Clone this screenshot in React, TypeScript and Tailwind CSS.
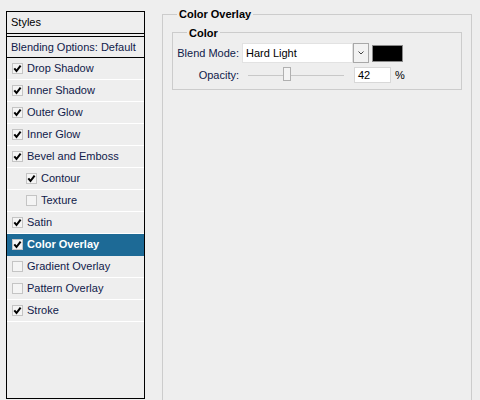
import React from "react";

type Item = { label: string; checked?: boolean; indent?: boolean; active?: boolean };

const items: Item[] = [
  { label: "Drop Shadow", checked: true },
  { label: "Inner Shadow", checked: true },
  { label: "Outer Glow", checked: true },
  { label: "Inner Glow", checked: true },
  { label: "Bevel and Emboss", checked: true },
  { label: "Contour", checked: true, indent: true },
  { label: "Texture", indent: true },
  { label: "Satin", checked: true },
  { label: "Color Overlay", checked: true, active: true },
  { label: "Gradient Overlay" },
  { label: "Pattern Overlay" },
  { label: "Stroke", checked: true },
];

function Check({ checked }: { checked?: boolean }) {
  return (
    <span className="flex h-[11px] w-[11px] shrink-0 items-center justify-center border border-[#c4c4c4] bg-[#f4f4f4]">
      {checked && (
        <svg width="9" height="9" viewBox="0 0 9 9">
          <path d="M1.3 4.4 L3.5 7 L7.6 1.6" fill="none" stroke="#000" strokeWidth="2" />
        </svg>
      )}
    </span>
  );
}

function StyleRow({ item }: { item: Item }) {
  return (
    <div
      className={`flex h-[22px] items-center gap-[4px] border-b ${
        item.active ? "border-[#1d6a96] bg-[#1d6a96] font-bold text-white" : "border-white text-[#10204a]"
      } ${item.indent ? "pl-[19px]" : "pl-[5px]"}`}
    >
      <Check checked={item.checked} />
      <span>{item.label}</span>
    </div>
  );
}

export default function App() {
  return (
    <div
      className="flex h-[400px] w-[480px] overflow-hidden bg-[#eeeeee] pl-[6px] pt-[11px] text-[11px] text-[#10204a]"
      style={{ fontFamily: '"Liberation Sans", Arial, sans-serif' }}
    >
      <div className="flex h-[388px] w-[139px] shrink-0 flex-col border border-black">
        <div className="flex h-[22px] items-center border-b border-black pl-[4px] text-black">Styles</div>
        <div className="mt-[2px] flex h-[22px] items-center border-y border-black pl-[4px]">
          Blending Options: Default
        </div>
        {items.map((it) => (
          <StyleRow key={it.label} item={it} />
        ))}
      </div>

      <fieldset className="ml-[17px] mt-[-5px] h-[420px] w-[310px] border border-[#cccccc] px-[9px]">
        <legend className="ml-[5px] px-[2px] text-[11px] font-bold text-black">Color Overlay</legend>
        <fieldset className="mt-[2px] border border-[#cccccc] pb-[6px]">
          <legend className="ml-[14px] px-[2px] font-bold text-black">Color</legend>
          <div className="mt-[2px] flex h-[20px] items-center">
            <span className="w-[66px] text-right text-[#10204a]">Blend Mode:</span>
            <div className="ml-[3px] flex h-[20px] w-[111px] items-center border border-[#e2e2e2] bg-white pl-[3px] text-black">
              Hard Light
            </div>
            <div className="flex h-[20px] w-[16px] items-center justify-center border border-[#a8a8a8] bg-[#f2f2f2]">
              <svg width="6" height="4" viewBox="0 0 6 4">
                <path d="M0.5 0.5 L3 3 L5.5 0.5" fill="none" stroke="#444" strokeWidth="1" />
              </svg>
            </div>
            <div className="ml-[3px] h-[17px] w-[31px] border border-[#8a8a8a] bg-black" />
          </div>
          <div className="mt-[4px] flex h-[16px] items-center">
            <span className="w-[66px] text-right text-[#10204a]">Opacity:</span>
            <div className="relative ml-[9px] h-[16px] w-[96px]">
              <div className="absolute left-0 right-0 top-[8px] h-px bg-[#c8c8c8]" />
              <div className="absolute left-[35px] top-[0px] h-[14px] w-[8px] border border-[#b0b0b0] bg-[#f4f4f4]" />
            </div>
            <div className="ml-[10px] flex h-[16px] w-[37px] items-center border border-[#d8d8d8] bg-white pl-[3px] text-black">
              42
            </div>
            <span className="ml-[4px] text-black">%</span>
          </div>
        </fieldset>
      </fieldset>
    </div>
  );
}
